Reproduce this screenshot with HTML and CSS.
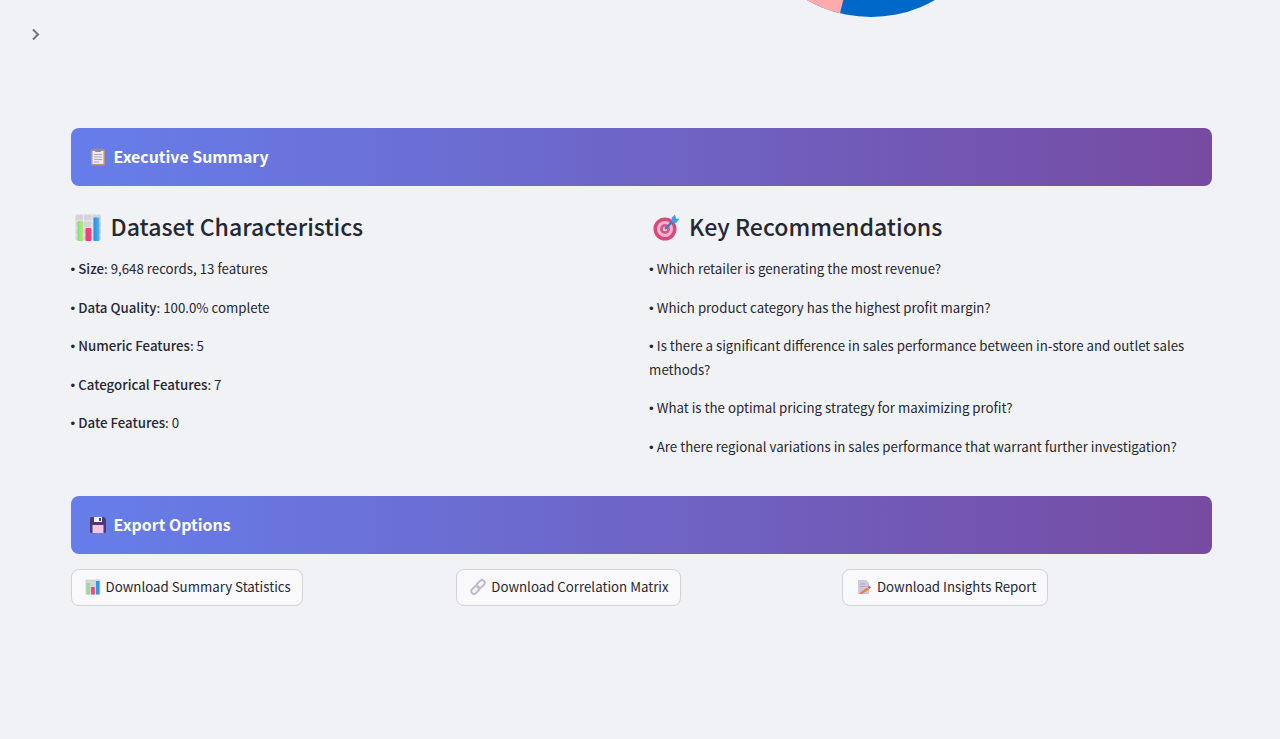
FILE: index.html
```html
<!DOCTYPE html>
<html lang="en">
<head>
<meta charset="utf-8">
<title>Executive Summary</title>
<link rel="stylesheet" href="styles.css">
</head>
<body>
<svg class="toggle" width="10" height="14" viewBox="0 0 10 14" aria-hidden="true"><path d="M2 1.500 7 6.500 2 11.500" fill="none" stroke="#72737e" stroke-width="2"/></svg>
<main class="main">
  <div class="chart">
    <svg class="pie" width="1141" height="17" viewBox="71 0 1141 17" aria-hidden="true">
      <circle cx="871" cy="-112" r="129" fill="#0068c9"/>
      <path d="M871 -112 L840 13.300 A129 129 0 0 1 742 -112Z" fill="#ffabab"/>
    </svg>
  </div>

  <div class="banner">
    <svg class="banner-icon" viewBox="0 0 18 18" aria-hidden="true">
      <rect x="2" y="1.500" width="14" height="16" rx="1" fill="#c58f77"/>
      <rect x="3.500" y="3" width="11" height="13" fill="#eceaf2"/>
      <rect x="6" y="0.500" width="6" height="3.500" rx=".8" fill="#8f8d9b"/>
      <path d="M5 6.500h8M5 9h8M5 11.500h8M5 14h5" stroke="#a9a7b5" stroke-width="1"/>
    </svg>
    <span>Executive Summary</span>
  </div>

  <div class="columns">
    <section class="col">
      <h2 class="heading">
        <svg class="heading-icon" viewBox="0 0 28 28" aria-hidden="true">
          <defs>
            <linearGradient id="bar-green" x1="0" y1="0" x2="1" y2="0"><stop offset="0" stop-color="#7fe07a"/><stop offset="1" stop-color="#c4e878"/></linearGradient>
            <linearGradient id="bar-blue" x1="0" y1="0" x2="1" y2="0"><stop offset="0" stop-color="#1f8fe0"/><stop offset="1" stop-color="#56b4ee"/></linearGradient>
          </defs>
          <rect x="0.500" y="0.500" width="25.500" height="26" rx="2" fill="#d6d3da"/>
          <path d="M0.500 7h25.500M0.500 14h25.500M0.500 21h25.500M8.500 .5v26M17 .5v26" stroke="#eeedf1" stroke-width="1"/>
          <rect x="2.500" y="7" width="6" height="20" rx="1" fill="url(#bar-green)"/>
          <rect x="10.500" y="14" width="6" height="13" rx="1" fill="#e8437f"/>
          <rect x="18.500" y="3.500" width="6" height="23.500" rx="1" fill="url(#bar-blue)"/>
        </svg>
        Dataset Characteristics
      </h2>
      <p class="line"><span class="dot">•</span><b>Size</b>: 9,648 records, 13 features</p>
      <p class="line"><span class="dot">•</span><b>Data Quality</b>: 100.0% complete</p>
      <p class="line"><span class="dot">•</span><b>Numeric Features</b>: 5</p>
      <p class="line"><span class="dot">•</span><b>Categorical Features</b>: 7</p>
      <p class="line"><span class="dot">•</span><b>Date Features</b>: 0</p>
    </section>
    <section class="col">
      <h2 class="heading">
        <svg class="heading-icon" viewBox="0 0 28 28" aria-hidden="true">
          <circle cx="12" cy="15" r="11.500" fill="#d94a7c"/>
          <circle cx="12" cy="15" r="8" fill="#efb7cc"/>
          <circle cx="12" cy="15" r="5" fill="#d9568a"/>
          <circle cx="12" cy="15" r="2.200" fill="#f1c7d4"/>
          <path d="M12 15 21 6" stroke="#2d7fc8" stroke-width="2.200"/>
          <path d="M18.500 4 22 .5 23 4.500 26.500 5 23 9l-4-.8z" fill="#3f9fe6"/>
        </svg>
        Key Recommendations
      </h2>
      <p class="line"><span class="dot">•</span>Which retailer is generating the most revenue?</p>
      <p class="line"><span class="dot">•</span>Which product category has the highest profit margin?</p>
      <p class="line"><span class="dot">•</span>Is there a significant difference in sales performance between in-store and outlet sales methods?</p>
      <p class="line"><span class="dot">•</span>What is the optimal pricing strategy for maximizing profit?</p>
      <p class="line"><span class="dot">•</span>Are there regional variations in sales performance that warrant further investigation?</p>
    </section>
  </div>

  <div class="banner">
    <svg class="banner-icon" viewBox="0 0 18 18" aria-hidden="true">
      <path d="M1 2.500A1.500 1.500 0 0 1 2.500 1H15l2 2v12.500a1.500 1.500 0 0 1-1.500 1.500h-13A1.500 1.500 0 0 1 1 15.500z" fill="#4a3a78"/>
      <rect x="5" y="1" width="8" height="5" fill="#f2eff6"/>
      <rect x="10" y="2" width="2" height="3" fill="#4a3a78"/>
      <rect x="3.500" y="9" width="11" height="8" fill="#f4c4dc"/>
    </svg>
    <span>Export Options</span>
  </div>

  <div class="downloads">
    <div class="cell"><button class="btn" type="button">
      <svg class="btn-icon" viewBox="0 0 16 16" aria-hidden="true">
        <rect x="0.500" y="0.500" width="15" height="15" rx="1" fill="#d6d3da"/>
        <rect x="1.500" y="4" width="3.500" height="11.500" fill="#96e08a"/>
        <rect x="6.200" y="8" width="3.500" height="7.500" fill="#e8437f"/>
        <rect x="11" y="2" width="3.500" height="13.500" fill="#2f9be0"/>
      </svg>
      Download Summary Statistics</button></div>
    <div class="cell"><button class="btn" type="button">
      <svg class="btn-icon" viewBox="0 0 16 16" aria-hidden="true">
        <g fill="none" stroke="#c3bbce" stroke-width="2">
          <rect x="0.800" y="8.200" width="9" height="5.400" rx="2.700" transform="rotate(-45 5.300 10.900)"/>
          <rect x="6.200" y="2.400" width="9" height="5.400" rx="2.700" transform="rotate(-45 10.700 5.100)"/>
        </g>
      </svg>
      Download Correlation Matrix</button></div>
    <div class="cell"><button class="btn" type="button">
      <svg class="btn-icon" viewBox="0 0 16 16" aria-hidden="true">
        <path d="M2 1h8l3 3v11H2z" fill="#cfc9e0"/>
        <path d="M4 5h6M4 7.500h6" stroke="#b3adc6"/>
        <path d="M3 14.500 11 8.500l2 2-7 4.500z" fill="#ee7c45"/>
        <path d="M11.500 8 13 6.500l2 2-1.500 1.500z" fill="#e85a6b"/>
      </svg>
      Download Insights Report</button></div>
  </div>
</main>
</body>
</html>
```
FILE: styles.css
```css
html, body {
  margin: 0;
  padding: 0;
  height: 100%;
  overflow: hidden;
}
body {
  background: #f0f2f6;
  color: #262730;
  font-family: "Noto Sans CJK SC", "Noto Sans", sans-serif;
  font-size: 13.280px;
  line-height: 23.500px;
}
.toggle {
  position: absolute;
  left: 31px;
  top: 28px;
}
.main {
  padding: 0 68.400px 0 70.600px;
}
.chart {
  height: 128px;
}
.pie {
  display: block;
}
.banner {
  display: flex;
  align-items: center;
  gap: 7px;
  height: 58px;
  padding: 0 18px;
  box-sizing: border-box;
  border-radius: 8px;
  background: linear-gradient(90deg, #667eea 0%, #764ba2 100%);
  color: #fff;
  font-size: 15.900px;
  font-weight: 700;
}
.banner-icon {
  width: 18px;
  height: 18px;
  flex: none;
}
.columns {
  display: grid;
  grid-template-columns: 1fr 1fr;
  gap: 16px;
  height: 310px;
}
.heading {
  display: flex;
  align-items: center;
  gap: 8px;
  margin: 0;
  padding: 22px 0 13px 4px;
  height: 36px;
  color: #262730;
  font-size: 23.080px;
  font-weight: 500;
  line-height: 36px;
}
.heading-icon {
  width: 28px;
  height: 28px;
  flex: none;
  margin-top: 3px;
}
.line {
  margin: 0 0 15px;
}
.line b {
  font-weight: 500;
}
.dot {
  margin-right: 3px;
  font-family: "Liberation Sans", sans-serif;
  line-height: 1;
}
.downloads {
  display: grid;
  grid-template-columns: repeat(3, 1fr);
  gap: 16px;
  margin-top: 15px;
}
.btn {
  display: inline-flex;
  align-items: center;
  gap: 5px;
  height: 37px;
  padding: 0 11px 2px 13px;
  border: 1px solid #d2d3d9;
  border-radius: 8px;
  background: #f9f9fb;
  color: #262730;
  font: inherit;
}
.btn-icon {
  width: 16px;
  height: 16px;
  flex: none;
}
```
